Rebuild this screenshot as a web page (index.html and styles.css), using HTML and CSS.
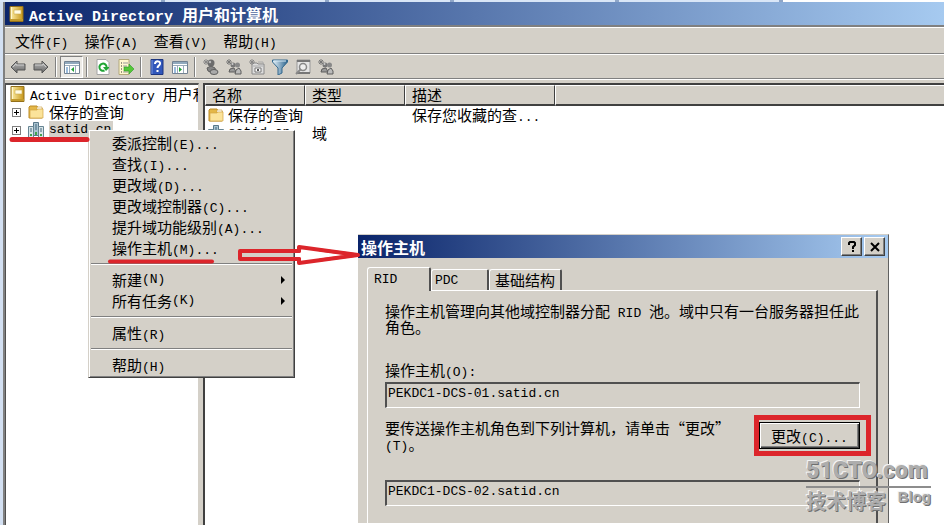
FILE: index.html
```html
<!DOCTYPE html>
<html lang="zh-CN">
<head>
<meta charset="utf-8">
<title>Active Directory 用户和计算机</title>
<link rel="stylesheet" href="styles.css">
</head>
<body>
<svg class="defs" aria-hidden="true">
  <defs>
    <linearGradient id="gold" x1="0" x2="1"><stop offset="0" stop-color="#fff0a8"/><stop offset="1" stop-color="#c59518"/></linearGradient>
    <linearGradient id="grey" x1="0" y1="0" x2="0" y2="1"><stop offset="0" stop-color="#bbb"/><stop offset="1" stop-color="#666"/></linearGradient>
    <linearGradient id="steel" x1="0" x2="1"><stop offset="0" stop-color="#e8f4fb"/><stop offset="1" stop-color="#29628c"/></linearGradient>
    <symbol id="book" viewBox="0 0 16 18"><path d="M2 1.500h13v15H2z" fill="url(#gold)" stroke="#94701a"/><path d="M2 14h13v2H2z" fill="#c29a2c"/><path d="M6 5h7v4H6z" fill="#fffbe4" stroke="#c9a84a" stroke-width=".6"/><path d="M3.500 2v12" stroke="#fff7ce"/></symbol>
    <symbol id="folder" viewBox="0 0 16 16"><path d="M1 14V3l1-1h7l1 2h4v10z" fill="#e4b747" stroke="#bc8c28"/><path d="M9 3h5v3H9z" fill="#fff" stroke="#c99f3d" stroke-width=".6"/><path d="M2 6h7l1-1h5v9H2z" fill="#fbe39a" stroke="#d2a444" stroke-width=".7"/></symbol>
    <symbol id="domain" viewBox="0 0 16 16"><path d="M5.500 .5h5v13h-5z" fill="#a9c3d0" stroke="#58788a"/><path d="M.5 4.500h5v11h-5zM10.500 4.500h5v11h-5z" fill="#d9e5e8" stroke="#668493"/><path d="M7 3h2M7 5h2M7 7h2M2 7h2M2 9h2M12 7h2M12 9h2" stroke="#42667d"/><path d="M3 12v2M13 12v2M8 10v3" stroke="#43a24b" stroke-width="2"/></symbol>
    <symbol id="arrow" viewBox="0 0 16 16"><path d="M1 8l6-6v3h8v6H7v3z" fill="url(#grey)" stroke="#555"/><path d="M3 8l3-3v1h8" fill="none" stroke="#ccc"/></symbol>
    <symbol id="panel" viewBox="0 0 16 16"><path d="M.5 2.500h15v12H.5z" fill="#fff" stroke="#738292"/><path d="M1 3h14v2H1z" fill="#91a9bd"/><path d="M1 6.500h14M5.500 7v7M11.500 7v7" stroke="#9bacbb"/><path d="M2 9h2M2 11h2M2 13h2" stroke="#3978b7"/></symbol>
    <symbol id="person" viewBox="0 0 16 16"><circle cx="8" cy="4" r="3.500" fill="#6c6c6c"/><path d="M4 9l4-2 4 2 1 4-3 1-5-2z" fill="#858585" stroke="#5d5d5d"/><ellipse cx="11" cy="13" rx="4" ry="2.500" fill="#aaa" stroke="#5d5d5d"/><path d="M0 3h6M3 0v6M1 1l4 4M5 1L1 5" stroke="#888"/><circle cx="7" cy="3" r="1.200" fill="#bbb"/></symbol>
    <symbol id="group" viewBox="0 0 16 16"><path d="M1 1l4 4M5 1L1 5M3 0v6M0 3h6" stroke="#777"/><circle cx="7" cy="6" r="2.500" fill="#777"/><circle cx="11.500" cy="6" r="2.500" fill="#888"/><path d="M3 13l1-3 4-1 2 4z" fill="#999" stroke="#5d5d5d"/><path d="M9 15l1-4 3-2 2 3v3z" fill="#bbb" stroke="#5d5d5d"/><circle cx="6.500" cy="5" r="1" fill="#ccc"/></symbol>
  </defs>
</svg>
<div class="backdrop" aria-hidden="true"><i></i><i></i><i class="narrow"></i><i></i><i></i><b></b></div>
<main class="window">
  <header class="titlebar"><svg class="book"><use href="#book"/></svg><h1><span class="lat">Active Directory </span>用户和计算机</h1></header>
  <nav class="menubar">
    <button>文件<span class="lat">(F)</span></button><button>操作<span class="lat">(A)</span></button><button>查看<span class="lat">(V)</span></button><button>帮助<span class="lat">(H)</span></button>
  </nav>
  <div class="toolbar">
    <button aria-label="后退"><svg class="wide"><use href="#arrow"/></svg></button>
    <button aria-label="前进"><svg class="wide flip"><use href="#arrow"/></svg></button>
    <span class="divider"></span>
    <button class="pressed" aria-label="显示控制台树"><svg><use href="#panel"/><path d="M10 8v5L7 10.500z" fill="#23a238"/></svg></button>
    <span class="divider"></span>
    <button aria-label="刷新"><svg viewBox="0 0 16 16"><path d="M2 .5h9l3 3v12H2z" fill="#fff" stroke="#a5a5a5"/><path d="M9.500 11.500A3.600 3.600 0 1 1 11.600 8" fill="none" stroke="#20a535" stroke-width="2"/><path d="M8 8h6v1l-3 3z" fill="#20a535"/></svg></button>
    <button aria-label="导出列表"><svg viewBox="0 0 16 16"><path d="M1 .5h10v15H1z" fill="#fff8cf" stroke="#b3a97c"/><path d="M3 4h1M3 7h1M3 10h1M3 13h1" stroke="#333"/><path d="M5 4h5M5 7h4M5 13h5" stroke="#999"/><path d="M6 8h5V5l5 5-5 5v-3H6z" fill="#55c738" stroke="#2a9a26" stroke-width=".6"/></svg></button>
    <span class="divider"></span>
    <button aria-label="帮助"><svg viewBox="0 0 16 16"><path d="M2 .5h12v15H2z" fill="#3157bb" stroke="#1c357f"/><path d="M3 1v14" stroke="#7793de"/><path d="M6 5c0-4 6-3 5 0-.5 1.500-2.500 2-2.500 4M8.500 11v2" fill="none" stroke="#fff" stroke-width="2"/></svg></button>
    <button aria-label="操作窗格"><svg><use href="#panel"/><path d="M7 8v5l3-2.500z" fill="#23a238"/></svg></button>
    <span class="divider"></span>
    <button aria-label="新建用户"><svg><use href="#person"/></svg></button>
    <button aria-label="新建组"><svg><use href="#group"/></svg></button>
    <button aria-label="新建组织单位"><svg viewBox="0 0 16 16"><path d="M3 4h5l1 1h6v10H3z" fill="#ddd" stroke="#888"/><path d="M4 7h10M9 3h5v2" stroke="#aaa" fill="none"/><path d="M6 9h6v4H6z" fill="#fff" stroke="#777"/><path d="M8 10h2v2H8z" fill="#555"/><path d="M0 3h6M3 0v6M1 1l4 4M5 1L1 5" stroke="#888"/></svg></button>
    <button aria-label="筛选"><svg viewBox="0 0 16 16"><path d="M.5 1h15v2L10 9v5l-4 2V9L.5 3z" fill="url(#steel)" stroke="#34698e"/><path d="M2 2h12" stroke="#dceef8"/></svg></button>
    <button aria-label="查找"><svg viewBox="0 0 16 16"><path d="M2 1h13v13H2z" fill="#e5e5e5" stroke="#999"/><path d="M2 2h13M2 14h13" stroke="#777" stroke-width="2"/><circle cx="8" cy="8" r="3.500" fill="#eee" stroke="#888" stroke-width="1.500"/><path d="M6 10l-5 5" stroke="#888" stroke-width="2"/></svg></button>
    <button aria-label="添加到组"><svg><use href="#group"/></svg></button>
  </div>
  <div class="panes">
    <ul class="tree">
      <li class="root"><svg class="book"><use href="#book"/></svg><span><span class="lat">Active Directory </span>用户和计算机</span></li>
      <li><span class="plus"></span><svg><use href="#folder"/></svg><span>保存的查询</span></li>
      <li><span class="plus"></span><svg><use href="#domain"/></svg><span class="lat selected">satid.cn</span></li>
    </ul>
    <div class="list">
      <table>
        <colgroup><col class="c1"><col class="c1"><col class="c2"><col></colgroup>
        <thead><tr><th>名称</th><th>类型</th><th>描述</th><th></th></tr></thead>
        <tbody>
          <tr><td><div class="cell"><svg><use href="#folder"/></svg>保存的查询</div></td><td></td><td>保存您收藏的查<span class="lat">...</span></td><td></td></tr>
          <tr><td><div class="cell"><svg><use href="#domain"/></svg><span class="lat">satid.cn</span></div></td><td>域</td><td></td><td></td></tr>
        </tbody>
      </table>
    </div>
  </div>
</main>

<div class="context" role="menu">
  <button role="menuitem">委派控制<span class="lat">(E)...</span></button>
  <button role="menuitem">查找<span class="lat">(I)...</span></button>
  <button role="menuitem">更改域<span class="lat">(D)...</span></button>
  <button role="menuitem">更改域控制器<span class="lat">(C)...</span></button>
  <button role="menuitem">提升域功能级别<span class="lat">(A)...</span></button>
  <button role="menuitem">操作主机<span class="lat">(M)...</span></button>
  <hr>
  <button role="menuitem" class="sub">新建<span class="lat">(N)</span></button>
  <button role="menuitem" class="sub">所有任务<span class="lat">(K)</span></button>
  <hr>
  <button role="menuitem">属性<span class="lat">(R)</span></button>
  <hr>
  <button role="menuitem">帮助<span class="lat">(H)</span></button>
</div>

<section class="dialog" role="dialog" aria-labelledby="dlg">
  <header class="dialog-title"><h2 id="dlg">操作主机</h2>
    <button aria-label="帮助"><svg viewBox="0 0 14 14"><path d="M4 5V3l1-1h4l1 1v2L8 7v2" fill="none" stroke="#000" stroke-width="2"/><path d="M7 10h2v2H7z"/></svg></button>
    <button aria-label="关闭"><svg viewBox="0 0 14 14"><path d="M3 3l8 8M11 3l-8 8" stroke="#000" stroke-width="2"/></svg></button>
  </header>
  <div class="dialog-body">
    <div class="tabs" role="tablist"><button role="tab" class="lat active" aria-selected="true">RID</button><button role="tab" class="lat pdc">PDC</button><button role="tab">基础结构</button></div>
    <div class="page">
      <p class="intro">操作主机管理向其他域控制器分配<span class="lat"> RID </span>池。域中只有一台服务器担任此<br>角色。</p>
      <label for="master">操作主机<span class="lat">(O):</span></label>
      <input id="master" readonly value="PEKDC1-DCS-01.satid.cn">
      <div class="change"><label for="target">要传送操作主机角色到下列计算机，请单击“更改”<br><span class="lat">(T)</span>。</label><button>更改<span class="lat">(C)...</span></button></div>
      <input id="target" readonly value="PEKDC1-DCS-02.satid.cn">
    </div>
  </div>
</section>

<svg class="marks" viewBox="0 0 944 525" aria-hidden="true">
  <g fill="none" stroke="#dc252b" stroke-linecap="round" stroke-linejoin="round">
    <path d="M12 139.500H87" stroke-width="5"/>
    <path d="M110 261.500H212" stroke-width="4"/>
    <path d="M299 251h-59v8h59" stroke-width="4"/>
    <path d="M299 259v4l59-8-59-8v4" stroke-width="4"/>
    <path d="M320 250l38 5-38 5" stroke-width="3"/>
  </g>
  <path d="M756.500 417.500h112v36h-112z" fill="none" stroke="#dc252b" stroke-width="5"/>
</svg>
<div class="watermark"><div class="brand">51CTO.com</div><div class="tag"><span>技术博客</span><span class="blog">Blog</span></div></div>
</body>
</html>
```
FILE: styles.css
```css
* { box-sizing: border-box; }
html, body { height: 100%; }
body {
  margin: 0;
  position: relative;
  display: flex;
  flex-direction: column;
  overflow: hidden;
  background: #d3e0f2;
  color: #000;
  font: 15px/18px "Noto Sans CJK SC", sans-serif;
}
button, input { font: inherit; color: inherit; }
button { margin: 0; padding: 0; border: 0; background: none; white-space: nowrap; }
svg { display: block; flex: none; width: 16px; height: 16px; }
.defs { position: absolute; width: 0; height: 0; }
.lat { font-family: "Liberation Mono", monospace; font-size: 13px; line-height: 0; white-space: pre; }
.book { height: 18px; }

.backdrop { display: flex; height: 2px; gap: 4px; background: #8fa6c8; }
.backdrop i { flex: 4; background: #d9e6f7; }
.backdrop .narrow { flex: 3; }
.backdrop b { flex: 4; background: #fff; }

.window {
  flex: 1;
  min-height: 0;
  margin-left: 3px;
  display: flex;
  flex-direction: column;
  border-left: 2px solid #808080;
  background: #d4d0c8;
}
.titlebar {
  display: flex;
  align-items: center;
  gap: 5px;
  height: 23px;
  padding-left: 3px;
  background: linear-gradient(90deg, #0a246a, #a6caf0);
  color: #fff;
}
h1, h2 { margin: 0; font-size: 16px; line-height: 22px; font-weight: 700; }
h1 .lat { font-size: 15px; }
.menubar {
  display: flex;
  gap: 16px;
  height: 29px;
  padding: 1px 0 0 10px;
  border-top: 2px solid #808080;
  border-bottom: 1px solid #808080;
  box-shadow: inset 0 1px #fff;
}
.toolbar {
  display: flex;
  align-items: center;
  height: 25px;
  padding-left: 1px;
  border-top: 1px solid #fff;
  border-bottom: 1px solid #808080;
}
.toolbar button { display: grid; place-items: center; width: 23px; height: 22px; }
.toolbar .wide { width: 18px; }
.flip { transform: scaleX(-1); }
.toolbar .pressed { border: 1px solid; border-color: #808080 #fff #fff #808080; background: #edebe7; }
.divider { width: 2px; height: 20px; margin: 0 3px; border-left: 1px solid #808080; border-right: 1px solid #fff; }

.panes { flex: 1; min-height: 0; display: flex; gap: 4px; padding-top: 3px; border-top: 1px solid #fff; }
.tree {
  width: 194px;
  margin: 0;
  padding: 0 0 0 3px;
  list-style: none;
  overflow: hidden;
  background: #fff;
  border-top: 2px solid #505050;
  border-left: 1px solid #505050;
  border-right: 1px solid #d4d0c8;
}
.tree li { display: flex; align-items: center; gap: 5px; height: 18px; padding-left: 3px; white-space: nowrap; }
.tree .root { padding-left: 0; }
.plus {
  flex: none;
  width: 9px;
  height: 9px;
  margin-right: 2px;
  border: 1px solid #808080;
  background: linear-gradient(#000, #000) center / 5px 1px no-repeat, linear-gradient(#000, #000) center / 1px 5px no-repeat, #fff;
}
.selected { padding-right: 2px; line-height: 18px; background: #d4d0c8; }
.list { flex: 1; min-width: 0; overflow: hidden; background: #fff; border-top: 2px solid #404040; border-left: 2px solid #404040; }
table { width: 100%; border-collapse: separate; border-spacing: 0; table-layout: fixed; }
.c1 { width: 100px; }
.c2 { width: 150px; }
th {
  height: 21px;
  padding: 0 0 0 6px;
  text-align: left;
  line-height: 16px;
  font-weight: inherit;
  background: #d4d0c8;
  border-top: 1px solid #fff;
  border-left: 1px solid #fff;
  border-right: 1px solid #404040;
  border-bottom: 2px solid #404040;
}
th:last-child { border-right: 0; }
td { height: 18px; padding: 0 0 0 7px; line-height: 18px; vertical-align: top; white-space: nowrap; }
td:first-child { padding-left: 3px; }
.cell { display: flex; align-items: center; gap: 4px; height: 18px; }

.context {
  position: absolute;
  left: 88px;
  top: 130px;
  width: 207px;
  padding: 1px 2px 2px;
  background: #d4d0c8;
  border: 1px solid;
  border-color: #fff #404040 #404040 #d4d0c8;
  box-shadow: inset 1px 0 #fff, inset -1px -1px #808080;
}
.context button { display: block; width: 100%; height: 21px; padding: 1px 0 0 21px; text-align: left; }
.context hr { height: 2px; margin: 5px 0 4px; border: 0; border-top: 1px solid #808080; border-bottom: 1px solid #fff; }
.context .sub { display: flex; align-items: center; padding-right: 7px; }
.sub::after { content: ""; margin-left: auto; border: 4px solid transparent; border-left-color: #000; border-right: 0; }

.dialog { position: absolute; left: 358px; top: 234px; bottom: 2px; width: 531px; display: flex; flex-direction: column; background: #d4d0c8; border-top: 1px solid #d4d0c8; border-right: 1px solid #606060; box-shadow: 0 2px #fff; }
.dialog-title { display: flex; align-items: center; gap: 2px; height: 23px; padding: 0 3px; background: linear-gradient(90deg, #0a246a, #a6caf0); color: #fff; }
.dialog-title h2 { flex: 1; }
.dialog-title button { display: grid; place-items: center; width: 21px; height: 19px; background: #d4d0c8; border: 1px solid; border-color: #fff #404040 #404040 #fff; box-shadow: inset -1px -1px #808080; }
.dialog-title svg { width: 14px; height: 14px; }
.dialog-body { flex: 1; min-height: 0; display: flex; flex-direction: column; padding: 9px 10px 0 9px; }
.tabs { display: flex; align-items: flex-end; height: 23px; }
.tabs button { height: 21px; padding: 0 5px; border: 1px solid #fff; border-right: 2px solid #505050; border-bottom: 0; border-radius: 3px 2px 0 0; text-align: left; }
.tabs .active { height: 24px; width: 64px; margin-bottom: -1px; padding: 0 6px; background: #d4d0c8; position: relative; }
.tabs .pdc { width: 58px; padding: 2px 3px 0; }
.page { flex: 1; min-height: 0; padding: 12px 16px 0 17px; border: 1px solid #fff; border-right: 2px solid #505050; border-bottom: 0; overflow: hidden; }
.intro, .page label { display: block; margin: 0; line-height: 16px; white-space: nowrap; }
.page > label { margin-top: 27px; }
.page input { display: block; width: 100%; height: 26px; margin-top: 4px; padding: 0 0 5px 1px; border: 2px solid; border-color: #505050 #fff #fff #505050; border-width: 2px 1px 1px 2px; background: #d4d0c8; font-family: "Liberation Mono", monospace; font-size: 13px; outline: 0; }
.change { display: flex; justify-content: space-between; align-items: flex-start; height: 68px; padding-top: 12px; }
.change button { width: 101px; height: 27px; margin-top: 2px; background: #d4d0c8; border: 1px solid #000; box-shadow: inset 1px 1px #fff, inset -1px -1px #404040, inset -2px -2px #808080; }

.marks { position: absolute; left: 0; top: 0; width: 944px; height: 525px; pointer-events: none; }
.watermark { position: absolute; right: 13px; bottom: 11px; width: 125px; color: #adadad; text-shadow: 1px 1px #707070, -1px -1px #f4f4f4; font-weight: 700; }
.brand { border-bottom: 2px solid #8d8d8d; font: 900 23px/30px Roboto, sans-serif; }
.tag { display: flex; justify-content: space-between; font-size: 20px; line-height: 26px; }
.blog { font: 700 15px/18px "Liberation Sans", sans-serif; }
```
